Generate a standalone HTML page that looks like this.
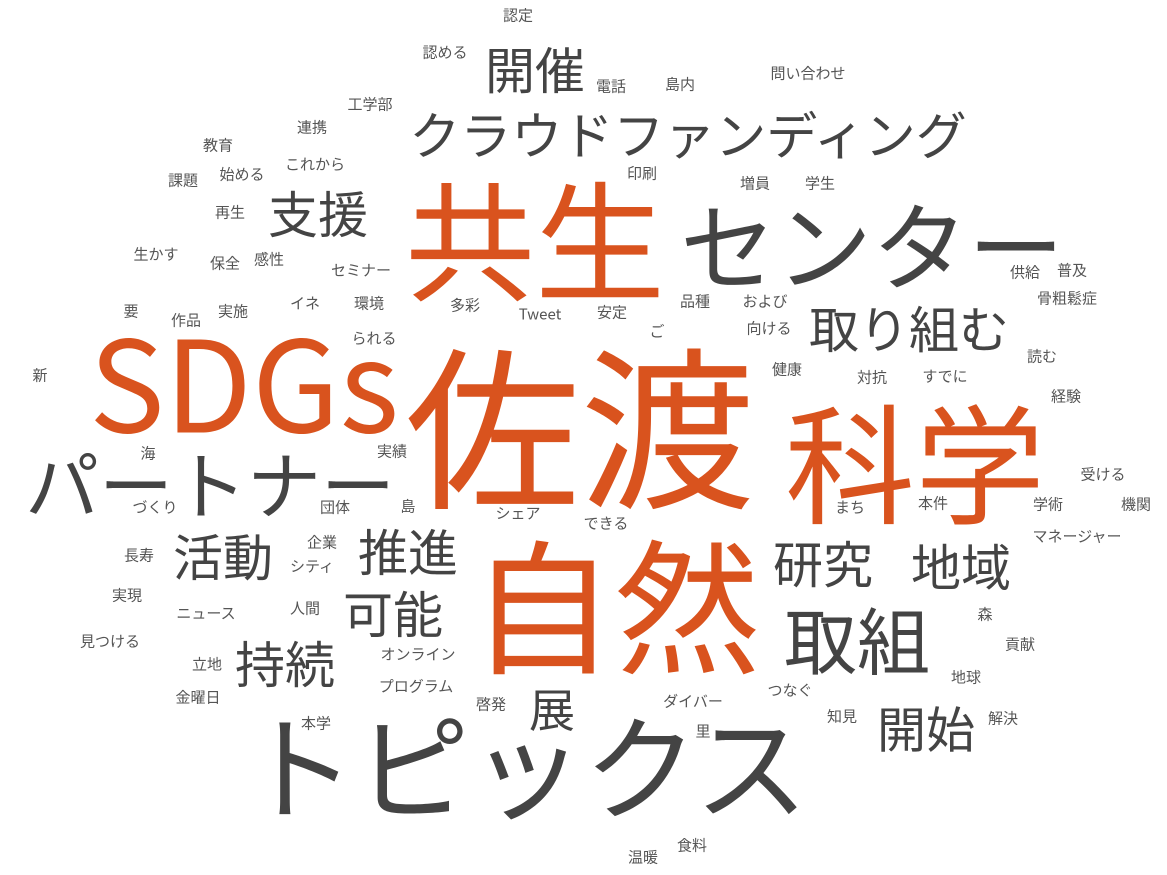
<!DOCTYPE html>
<html><head><meta charset="utf-8"><style>
html,body{margin:0;padding:0;background:#fff;width:1167px;height:875px;overflow:hidden}
body{position:relative;font-family:"Noto Sans CJK JP","Liberation Sans",sans-serif}
span{position:absolute;transform:translate(-50%,-50%);line-height:1;white-space:nowrap;color:#555;font-size:15px}
.o{color:#d9531e}.d{color:#444}
</style></head><body>
<span class="o" style="left:580px;top:420px;font-size:175px">佐渡</span>
<span class="o" style="left:615px;top:600px;font-size:145px">自然</span>
<span class="o" style="left:535px;top:235px;font-size:130px">共生</span>
<span class="o" style="left:915px;top:458px;font-size:130px">科学</span>
<span class="o" style="left:244px;top:378px;font-size:127px">SDGs</span>
<span class="d" style="left:872px;top:242px;font-size:96px">センター</span>
<span class="d" style="left:210px;top:482px;font-size:74px">パートナー</span>
<span class="d" style="left:525px;top:762px;font-size:114px">トピックス</span>
<span class="d" style="left:688px;top:133px;font-size:51px">クラウドファンディング</span>
<span class="d" style="left:535px;top:68px;font-size:50px">開催</span>
<span class="d" style="left:318px;top:212px;font-size:50px">支援</span>
<span class="d" style="left:909px;top:327px;font-size:50px">取り組む</span>
<span class="d" style="left:223px;top:555px;font-size:50px">活動</span>
<span class="d" style="left:408px;top:550px;font-size:50px">推進</span>
<span class="d" style="left:393px;top:612px;font-size:50px">可能</span>
<span class="d" style="left:285px;top:662px;font-size:50px">持続</span>
<span class="d" style="left:823px;top:562px;font-size:50px">研究</span>
<span class="d" style="left:961px;top:565px;font-size:50px">地域</span>
<span class="d" style="left:857px;top:638px;font-size:73px">取組</span>
<span class="d" style="left:926px;top:727px;font-size:49px">開始</span>
<span class="d" style="left:552px;top:708px;font-size:46px">展</span>
<span style="left:518px;top:15px">認定</span>
<span style="left:445px;top:52px">認める</span>
<span style="left:611px;top:86px">電話</span>
<span style="left:680px;top:84px">島内</span>
<span style="left:808px;top:73px">問い合わせ</span>
<span style="left:370px;top:104px">工学部</span>
<span style="left:312px;top:127px">連携</span>
<span style="left:218px;top:145px">教育</span>
<span style="left:315px;top:164px">これから</span>
<span style="left:242px;top:174px">始める</span>
<span style="left:183px;top:180px">課題</span>
<span style="left:642px;top:173px">印刷</span>
<span style="left:755px;top:183px">増員</span>
<span style="left:820px;top:183px">学生</span>
<span style="left:230px;top:212px">再生</span>
<span style="left:156px;top:254px">生かす</span>
<span style="left:225px;top:263px">保全</span>
<span style="left:269px;top:259px">感性</span>
<span style="left:361px;top:270px">セミナー</span>
<span style="left:1025px;top:272px">供給</span>
<span style="left:1072px;top:270px">普及</span>
<span style="left:305px;top:303px">イネ</span>
<span style="left:369px;top:303px">環境</span>
<span style="left:465px;top:305px">多彩</span>
<span style="left:540px;top:314px">Tweet</span>
<span style="left:612px;top:312px">安定</span>
<span style="left:695px;top:301px">品種</span>
<span style="left:765px;top:301px">および</span>
<span style="left:1067px;top:298px">骨粗鬆症</span>
<span style="left:131px;top:311px">要</span>
<span style="left:186px;top:320px">作品</span>
<span style="left:233px;top:311px">実施</span>
<span style="left:657px;top:331px">ご</span>
<span style="left:769px;top:328px">向ける</span>
<span style="left:374px;top:338px">られる</span>
<span style="left:1042px;top:356px">読む</span>
<span style="left:40px;top:375px">新</span>
<span style="left:787px;top:369px">健康</span>
<span style="left:872px;top:377px">対抗</span>
<span style="left:945px;top:376px">すでに</span>
<span style="left:1066px;top:396px">経験</span>
<span style="left:148px;top:453px">海</span>
<span style="left:392px;top:451px">実績</span>
<span style="left:1103px;top:474px">受ける</span>
<span style="left:155px;top:507px">づくり</span>
<span style="left:335px;top:507px">団体</span>
<span style="left:408px;top:506px">島</span>
<span style="left:518px;top:513px">シェア</span>
<span style="left:606px;top:523px">できる</span>
<span style="left:850px;top:507px">まち</span>
<span style="left:933px;top:503px">本件</span>
<span style="left:1048px;top:504px">学術</span>
<span style="left:1136px;top:504px">機関</span>
<span style="left:1077px;top:536px">マネージャー</span>
<span style="left:322px;top:542px">企業</span>
<span style="left:139px;top:555px">長寿</span>
<span style="left:312px;top:566px">シティ</span>
<span style="left:127px;top:595px">実現</span>
<span style="left:206px;top:613px">ニュース</span>
<span style="left:305px;top:608px">人間</span>
<span style="left:985px;top:614px">森</span>
<span style="left:110px;top:641px">見つける</span>
<span style="left:1020px;top:644px">貢献</span>
<span style="left:418px;top:654px">オンライン</span>
<span style="left:207px;top:664px">立地</span>
<span style="left:966px;top:677px">地球</span>
<span style="left:416px;top:686px">プログラム</span>
<span style="left:198px;top:697px">金曜日</span>
<span style="left:790px;top:690px">つなぐ</span>
<span style="left:693px;top:701px">ダイバー</span>
<span style="left:491px;top:704px">啓発</span>
<span style="left:842px;top:716px">知見</span>
<span style="left:1003px;top:718px">解決</span>
<span style="left:316px;top:723px">本学</span>
<span style="left:703px;top:731px">里</span>
<span style="left:692px;top:845px">食料</span>
<span style="left:643px;top:857px">温暖</span>
</body></html>
